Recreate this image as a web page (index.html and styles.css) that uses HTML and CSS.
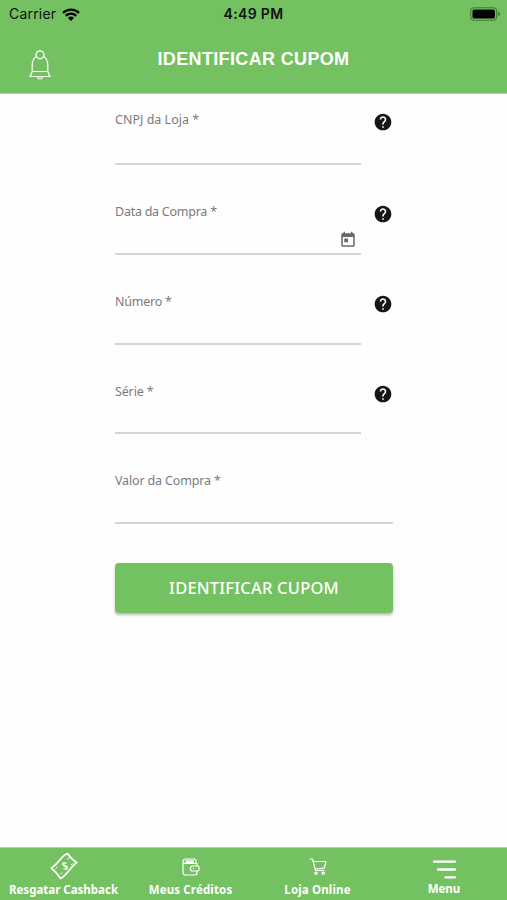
FILE: index.html
```html
<!DOCTYPE html>
<html lang="pt-BR">
<head>
<meta charset="utf-8">
<title>Identificar Cupom</title>
<link rel="stylesheet" href="styles.css">
</head>
<body>
<svg width="0" height="0" class="defs" aria-hidden="true">
  <symbol id="help" viewBox="0 0 24 24"><path d="M12 2C6.48 2 2 6.48 2 12s4.480 10 10 10 10-4.480 10-10S17.520 2 12 2zm1 17h-2v-2h2v2zm2.070-7.750l-.9.920C13.450 12.900 13 13.500 13 15h-2v-.5c0-1.100.450-2.100 1.170-2.830l1.240-1.260c.370-.360.590-.860.590-1.410 0-1.100-.9-2-2-2s-2 .9-2 2H8c0-2.210 1.790-4 4-4s4 1.790 4 4c0 .880-.360 1.680-.930 2.250z"/></symbol>
</svg>
<div class="app">
  <header class="header">
    <div class="status">
      <div class="carrier"><span>Carrier</span>
        <svg class="wifi" viewBox="0 0 18 13"><path d="M1 4.800a11.500 11.500 0 0 1 16 0M3.800 7.800a7.500 7.500 0 0 1 10.400 0" fill="none" stroke="#000" stroke-width="2.300"/><path d="M9 13L5.900 9.900a4.400 4.400 0 0 1 6.200 0z"/></svg>
      </div>
      <div class="time">4:49 PM</div>
      <svg class="battery" viewBox="0 0 31 14"><rect x=".7" y=".7" width="26" height="12.600" rx="3.500" fill="none" stroke="#437b39" stroke-width="1.100"/><rect x="2.500" y="2.500" width="22.400" height="9" rx="1.500"/><path d="M28.200 4.700q2 .7 2 2.300t-2 2.300z" fill="#437b39"/></svg>
    </div>
    <div class="titlebar">
      <svg class="bell" viewBox="0 0 22 30"><g fill="none" stroke="#fff" stroke-width="1.200"><circle cx="11" cy="4.800" r="4"/><path d="M7.300 6.400C4.500 8 3.300 11 3.200 15v6.500L1 26.500h20l-2.200-5V15c-.1-4-1.300-7-4.100-8.600M3.200 21.500h15.600M8.400 26.500q.5 2.500 2.600 2.500t2.600-2.500"/></g></svg>
      <h1>IDENTIFICAR CUPOM</h1>
    </div>
  </header>
  <main class="form">
    <div class="row first"><div class="field"><label class="l1">CNPJ da Loja *</label></div><svg class="help"><use href="#help"/></svg></div>
    <div class="row"><div class="field"><label class="l2">Data da Compra *</label>
      <svg class="calendar" viewBox="0 0 24 24"><path d="M19 3h-1V1h-2v2H8V1H6v2H5c-1.110 0-1.990.9-1.990 2L3 19c0 1.100.890 2 2 2h14c1.100 0 2-.9 2-2V5c0-1.100-.9-2-2-2zm0 16H5V8h14v11zM7 10h5v5H7z"/></svg>
    </div><svg class="help"><use href="#help"/></svg></div>
    <div class="row"><div class="field"><label class="l3">Número *</label></div><svg class="help"><use href="#help"/></svg></div>
    <div class="row"><div class="field"><label class="l4">Série *</label></div><svg class="help"><use href="#help"/></svg></div>
    <div class="row"><div class="field"><label class="l5">Valor da Compra *</label></div></div>
    <button class="submit">IDENTIFICAR CUPOM</button>
  </main>
  <nav class="tabs">
    <a class="tab"><svg class="cash" viewBox="0 0 28 28"><g fill="none" stroke="#fff" stroke-linejoin="round"><path stroke-width="1.700" d="M1.200 16C7.500 13 10.500 4.500 17.500 1.500Q21.500 7.500 26.800 10.500C20.500 14.500 18 22.500 10.500 26.500Q6.500 20 1.200 16z"/><path stroke-width="1.200" d="M16.500 11.500c-1.600-1.600-4.600 0-3.500 1.700 1 1.300 3.200.2 4.100 1.500 1 1.700-1.600 3.300-3.600 1.800M12.500 10.500l4.700 7"/><path d="M5.500 16.500l2-1.500M19 6l-1.800 1.300M10.500 22l1.700-1.200M22.500 11.500l-1.500 1.500" stroke-width="1"/></g></svg><span class="n1">Resgatar Cashback</span></a>
    <a class="tab"><svg class="wallet" viewBox="0 0 18 18"><g fill="none" stroke="#fff" stroke-width="1.200"><path d="M15 8V5.500H3.500Q1 5.500 1 3.200V14.500Q1 17 3.500 17H13q2 0 2-2v-2M1 3.500Q1 1 3.500 1H12q2 0 2 2v2.500M15.800 8H11q-2.800 0-2.800 2.500T11 13h4.800q1.200 0 1.200-1.200V9.200Q17 8 15.800 8z"/><path d="M3.500 2.800H12M3.500 4.300H12M11 10.500h1"/></g></svg><span class="n2">Meus Créditos</span></a>
    <a class="tab"><svg class="cart" viewBox="0 0 18 18"><g fill="none" stroke="#fff" stroke-width="1.200" stroke-linejoin="round"><path d="M.5 1h3l3 11.500h9M4.100 3.500H17l-1.800 6.700L6 11"/><circle cx="7" cy="15.300" r="1.200"/><circle cx="14.200" cy="15.300" r="1.200"/></g></svg><span class="n3">Loja Online</span></a>
    <a class="tab"><svg class="menu" viewBox="0 0 22 18"><path d="M1 1.500h20M4.800 9H21M12 16.500h9" stroke="#fff" stroke-width="2.300" stroke-linecap="round"/></svg><span class="n4">Menu</span></a>
  </nav>
</div>
</body>
</html>
```
FILE: styles.css
```css
* { box-sizing: border-box; }
body { margin: 0; background: #fefefe; font-family: "Noto Sans", sans-serif; }
svg { display: block; flex: none; }
.defs { position: absolute; }
.app { width: 507px; height: 900px; display: flex; flex-direction: column; }
.header { height: 94px; background: #73c160; border-bottom: 1px solid #a9d89d; }
.status { height: 28px; display: grid; grid-template-columns: 1fr auto 1fr; align-items: center; padding: 0 6px 0 9px; font-family: Inter, sans-serif; font-size: 14px; line-height: 28px; color: #111; }
.carrier { display: flex; gap: 6px; align-items: center; letter-spacing: .2px; }
.wifi { width: 18px; height: 13px; }
.time { font-weight: 600; font-size: 14px; letter-spacing: .35px; margin-right: 3px; }
.battery { width: 31px; height: 14px; justify-self: end; }
.titlebar { height: 65px; display: grid; grid-template-columns: 79px 1fr 79px; align-items: center; }
.bell { width: 22px; height: 30px; margin: 9px 0 0 29px; }
h1 { margin: 0 0 3px; text-align: center; font: 700 18px/24px "Liberation Sans", sans-serif; letter-spacing: .35px; color: #fff; white-space: nowrap; }
.form { flex: 1; width: 278px; margin-left: 115px; }
.row { height: 89.8px; display: flex; gap: 11.500px; }
.row.first { height: 71px; }
.field { flex: 1; display: flex; justify-content: space-between; border-bottom: 2px solid #d4d4d4; padding-top: 38px; }
.first .field { padding-top: 17px; }
label { font-size: 12.500px; line-height: 18px; color: #7b7b7b; white-space: nowrap; }
.l2 { letter-spacing: -.25px; }
.l3 { letter-spacing: -.25px; }
.l4 { letter-spacing: -.15px; }
.l5 { letter-spacing: -.15px; }
.help { width: 20px; height: 20px; margin: 39px .5px 0 0; fill: #161616; }
.first .help { margin-top: 18px; }
.calendar { width: 18px; height: 18px; margin: 28px 4px 0 0; fill: #686868; }
.submit { display: block; width: 278px; height: 50px; margin-top: 39px; padding: 0; border: 0; border-radius: 4px; background: #73c160; box-shadow: 0 2px 3px rgba(0,0,0,.28); color: #fff; font: 500 16.500px/50px "Noto Sans", sans-serif; letter-spacing: .2px; }
.tabs { height: 53px; background: #73c160; border-top: 1px solid #a9d89d; display: grid; grid-template-columns: 127px 127px 127px 126px; }
.tab { display: flex; flex-direction: column; align-items: center; justify-content: space-between; color: #fff; font-size: 11.500px; font-weight: 700; line-height: 16px; padding-bottom: 2px; white-space: nowrap; }
.n2 { letter-spacing: .15px; }
.n3 { letter-spacing: .15px; }
.cash { width: 28px; height: 28px; margin-top: 4px; }
.wallet { width: 18px; height: 18px; margin-top: 10px; }
.cart { width: 18px; height: 18px; margin-top: 10px; }
.menu { width: 23px; height: 19px; margin-top: 12px; }
.n4 { margin-bottom: 1px; }
```
